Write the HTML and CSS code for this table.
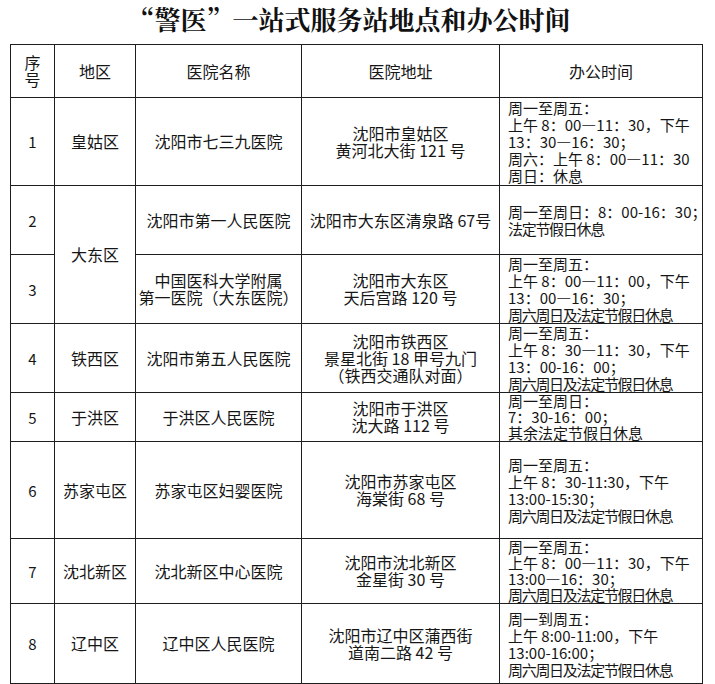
FILE: index.html
```html
<!DOCTYPE html>
<html lang="zh-CN">
<head>
<meta charset="utf-8">
<title>“警医”一站式服务站地点和办公时间</title>
<link rel="stylesheet" href="styles.css">
</head>
<body>
<div class="page">
  <h1 class="title">“警医”一站式服务站地点和办公时间</h1>
  <table class="sched">
    <colgroup>
      <col class="c-no">
      <col class="c-area">
      <col class="c-name">
      <col class="c-addr">
      <col class="c-time">
    </colgroup>
    <thead>
      <tr class="r-head">
        <th>序<br>号</th>
        <th>地区</th>
        <th>医院名称</th>
        <th>医院地址</th>
        <th>办公时间</th>
      </tr>
    </thead>
    <tbody>
      <tr class="r1">
        <td class="no">1</td>
        <td>皇姑区</td>
        <td>沈阳市七三九医院</td>
        <td>沈阳市皇姑区<br>黄河北大街 121 号</td>
        <td class="time">周一至周五：<br>上午 8：00—11：30，下午<br>13：30—16：30；<br>周六：上午 8：00—11：30<br>周日：休息</td>
      </tr>
      <tr class="r2">
        <td class="no">2</td>
        <td rowspan="2">大东区</td>
        <td>沈阳市第一人民医院</td>
        <td>沈阳市大东区清泉路 67号</td>
        <td class="time">周一至周日：8：00-16：30；<br><span class="cond">法定节假日休息</span></td>
      </tr>
      <tr class="r3">
        <td class="no">3</td>
        <td>中国医科大学附属<br>第一医院（大东医院）</td>
        <td>沈阳市大东区<br>天后宫路 120 号</td>
        <td class="time">周一至周五：<br>上午 8：00—11：00，下午<br>13：00—16：30；<br><span class="cond">周六周日及法定节假日休息</span></td>
      </tr>
      <tr class="r4">
        <td class="no">4</td>
        <td>铁西区</td>
        <td>沈阳市第五人民医院</td>
        <td>沈阳市铁西区<br>景星北街 18 甲号九门<br>（铁西交通队对面）</td>
        <td class="time">周一至周五：<br>上午 8：30—11：30，下午<br>13：00-16：00；<br><span class="cond">周六周日及法定节假日休息</span></td>
      </tr>
      <tr class="r5">
        <td class="no">5</td>
        <td>于洪区</td>
        <td>于洪区人民医院</td>
        <td>沈阳市于洪区<br>沈大路 112 号</td>
        <td class="time tight">周一至周日：<br>7：30-16：00；<br>其余法定节假日休息</td>
      </tr>
      <tr class="r6">
        <td class="no">6</td>
        <td>苏家屯区</td>
        <td>苏家屯区妇婴医院</td>
        <td>沈阳市苏家屯区<br>海棠街 68 号</td>
        <td class="time">周一至周五：<br>上午 8：30-11:30，下午<br>13:00-15:30；<br><span class="cond">周六周日及法定节假日休息</span></td>
      </tr>
      <tr class="r7">
        <td class="no">7</td>
        <td>沈北新区</td>
        <td>沈北新区中心医院</td>
        <td>沈阳市沈北新区<br>金星街 30 号</td>
        <td class="time tight">周一至周五：<br>上午 8：00—11：30，下午<br>13:00—16：30；<br><span class="cond">周六周日及法定节假日休息</span></td>
      </tr>
      <tr class="r8">
        <td class="no">8</td>
        <td>辽中区</td>
        <td>辽中区人民医院</td>
        <td>沈阳市辽中区蒲西街<br>道南二路 42 号</td>
        <td class="time">周一到周五：<br>上午 8:00-11:00，下午<br>13:00-16:00；<br><span class="cond">周六周日及法定节假日休息</span></td>
      </tr>
    </tbody>
  </table>
</div>
</body>
</html>
```

FILE: styles.css
```css
html, body {
  margin: 0;
  padding: 0;
  background: #ffffff;
}

body {
  font-family: "Noto Sans CJK SC", "Noto Sans", sans-serif;
  color: #161616;
}

.page {
  width: 715px;
  height: 684px;
  padding: 5px 0 0 10px;
  box-sizing: border-box;
  overflow: hidden;
}

.title {
  width: 693px;
  box-sizing: border-box;
  padding-right: 14px;
  margin: 0 0 12px 0;
  text-align: center;
  font-family: "Noto Serif CJK SC", "Noto Sans CJK SC", serif;
  font-size: 26px;
  line-height: 27px;
  font-weight: 700;
  color: #111111;
  white-space: nowrap;
}

.sched {
  border-collapse: collapse;
  table-layout: fixed;
  width: 693px;
  font-size: 16px;
}

.c-no { width: 44px; }
.c-area { width: 81px; }
.c-name { width: 166px; }
.c-addr { width: 198px; }
.c-time { width: 203px; }

.sched th,
.sched td {
  border: 1px solid #1e1e1e;
  padding: 0;
  text-align: center;
  vertical-align: middle;
  font-weight: 400;
  line-height: 17px;
}

.sched th {
  font-size: 16px;
}

.sched td.no {
  font-size: 15px;
}

.sched td.time {
  text-align: left;
  padding-left: 8px;
  font-size: 15px;
  line-height: 17px;
  white-space: nowrap;
}

.sched td.tight {
  line-height: 16px;
}

.cond {
  letter-spacing: -1.3px;
}

.r-head { height: 53px; }
.r1 { height: 88px; }
.r2 { height: 69px; }
.r3 { height: 69px; }
.r4 { height: 69px; }
.r5 { height: 49px; }
.r6 { height: 97px; }
.r7 { height: 65px; }
.r8 { height: 80px; }
```
